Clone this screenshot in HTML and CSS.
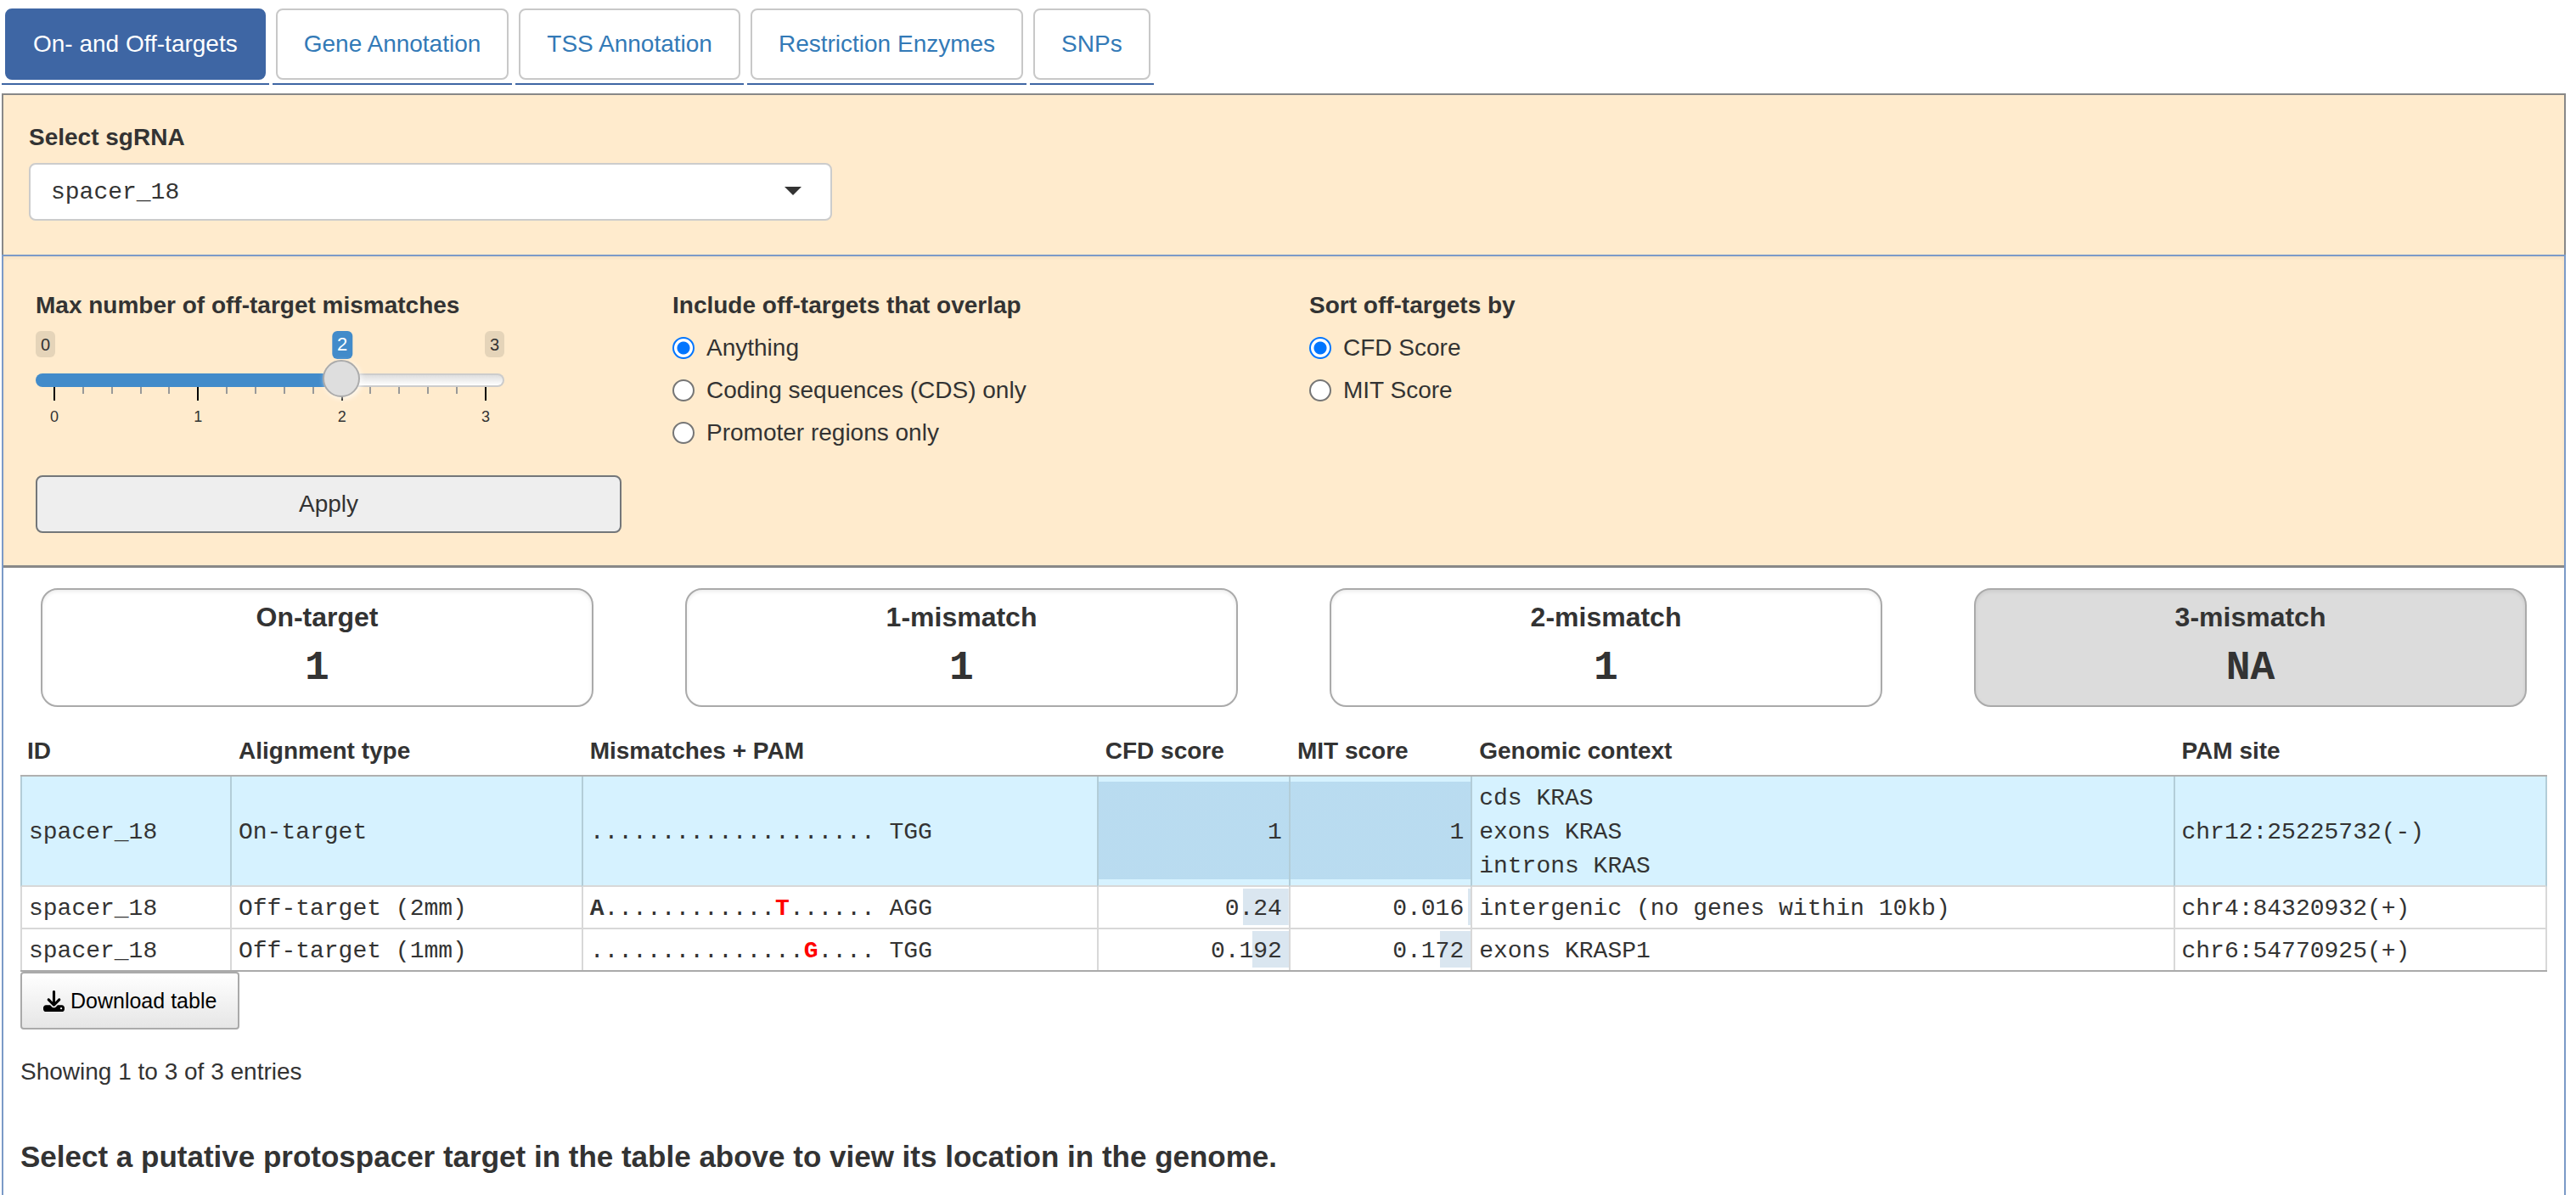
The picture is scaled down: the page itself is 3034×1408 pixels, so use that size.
FILE: index.html
```html
<!DOCTYPE html>
<html lang="en">
<head>
<meta charset="utf-8">
<title>On- and Off-targets</title>
<link rel="stylesheet" href="styles.css">
</head>
<body>
<nav>
  <ul class="tabs">
    <li class="tab"><a class="tab-link tab-link-active" href="#targets" aria-current="page">On- and Off-targets</a></li>
    <li class="tab"><a class="tab-link" href="#genes">Gene Annotation</a></li>
    <li class="tab"><a class="tab-link" href="#tss">TSS Annotation</a></li>
    <li class="tab"><a class="tab-link" href="#enzymes">Restriction Enzymes</a></li>
    <li class="tab"><a class="tab-link" href="#snps">SNPs</a></li>
  </ul>
</nav>
<section class="picker">
  <label class="field-label" for="sgrna">Select sgRNA</label>
  <div class="select-wrap">
    <select class="select" id="sgrna"><option>spacer_18</option></select>
    <svg class="select-arrow" viewBox="0 0 20 10" aria-hidden="true"><path d="M0 0H20L10 10Z"/></svg>
  </div>
</section>
<main class="panel" id="targets">
  <form class="filters">
    <div class="filter">
      <label class="field-label" for="mismatches">Max number of off-target mismatches</label>
      <div class="slider">
        <div class="slider-values">
          <span class="slider-end">0</span>
          <output class="slider-current" for="mismatches">2</output>
          <span class="slider-end">3</span>
        </div>
        <input class="slider-input" id="mismatches" type="range" min="0" max="3" value="2">
        <div class="slider-ticks" aria-hidden="true">
          <i class="tick tick-major"></i><i class="tick"></i><i class="tick"></i><i class="tick"></i><i class="tick"></i>
          <i class="tick tick-major"></i><i class="tick"></i><i class="tick"></i><i class="tick"></i><i class="tick"></i>
          <i class="tick tick-major"></i><i class="tick"></i><i class="tick"></i><i class="tick"></i><i class="tick"></i>
          <i class="tick tick-major"></i>
        </div>
        <div class="slider-scale"><span>0</span><span>1</span><span>2</span><span>3</span></div>
      </div>
      <button class="apply" type="button">Apply</button>
    </div>
    <fieldset class="filter">
      <legend class="field-label">Include off-targets that overlap</legend>
      <label class="choice"><input class="radio" type="radio" name="overlap" checked>Anything</label>
      <label class="choice"><input class="radio" type="radio" name="overlap">Coding sequences (CDS) only</label>
      <label class="choice"><input class="radio" type="radio" name="overlap">Promoter regions only</label>
    </fieldset>
    <fieldset class="filter">
      <legend class="field-label">Sort off-targets by</legend>
      <label class="choice"><input class="radio" type="radio" name="sort" checked>CFD Score</label>
      <label class="choice"><input class="radio" type="radio" name="sort">MIT Score</label>
    </fieldset>
  </form>
  <div class="cards">
    <div class="card"><h2 class="card-title">On-target</h2><p class="card-count">1</p></div>
    <div class="card"><h2 class="card-title">1-mismatch</h2><p class="card-count">1</p></div>
    <div class="card"><h2 class="card-title">2-mismatch</h2><p class="card-count">1</p></div>
    <div class="card card-off"><h2 class="card-title">3-mismatch</h2><p class="card-count">NA</p></div>
  </div>
  <div class="results">
    <table class="targets">
      <colgroup>
        <col class="col-id"><col class="col-type"><col class="col-mismatch"><col class="col-cfd"><col class="col-mit"><col class="col-context"><col>
      </colgroup>
      <thead>
        <tr><th>ID</th><th>Alignment type</th><th>Mismatches + PAM</th><th>CFD score</th><th>MIT score</th><th>Genomic context</th><th>PAM site</th></tr>
      </thead>
      <tbody>
        <tr class="on-target">
          <td>spacer_18</td><td>On-target</td><td>.................... TGG</td>
          <td class="score" style="--score:100%">1</td><td class="score" style="--score:100%">1</td>
          <td>cds KRAS<br>exons KRAS<br>introns KRAS</td><td>chr12:25225732(-)</td>
        </tr>
        <tr>
          <td>spacer_18</td><td>Off-target (2mm)</td><td><b>A</b>............<b class="seed">T</b>...... AGG</td>
          <td class="score" style="--score:24%">0.24</td><td class="score" style="--score:1.6%">0.016</td>
          <td>intergenic (no genes within 10kb)</td><td>chr4:84320932(+)</td>
        </tr>
        <tr>
          <td>spacer_18</td><td>Off-target (1mm)</td><td>...............<b class="seed">G</b>.... TGG</td>
          <td class="score" style="--score:19.2%">0.192</td><td class="score" style="--score:17.2%">0.172</td>
          <td>exons KRASP1</td><td>chr6:54770925(+)</td>
        </tr>
      </tbody>
    </table>
    <button class="download" type="button">
      <svg class="download-icon" viewBox="0 0 512 512" aria-hidden="true"><path d="M288 32c0-17.700-14.300-32-32-32s-32 14.300-32 32V274.700l-73.400-73.400c-12.500-12.500-32.800-12.500-45.300 0s-12.500 32.800 0 45.300l128 128c12.500 12.500 32.800 12.500 45.300 0l128-128c12.500-12.500 12.500-32.800 0-45.300s-32.800-12.500-45.300 0L288 274.700V32zM64 352c-35.300 0-64 28.700-64 64v32c0 35.300 28.700 64 64 64H448c35.300 0 64-28.700 64-64V416c0-35.300-28.700-64-64-64H346.500l-45.300 45.300c-25 25-65.500 25-90.500 0L165.500 352H64zm368 56a24 24 0 1 1 0 48 24 24 0 1 1 0-48z"/></svg>
      Download table
    </button>
    <p class="entries">Showing 1 to 3 of 3 entries</p>
    <h3 class="hint">Select a putative protospacer target in the table above to view its location in the genome.</h3>
  </div>
</main>
</body>
</html>
```
FILE: styles.css
```css
* {
  box-sizing: border-box;
}

body {
  display: flex;
  flex-direction: column;
  min-height: 100vh;
  margin: 0;
  padding: 10px 12px 0 2px;
  background: #fff;
  color: #333;
  font: 28px/40px "Liberation Sans", Arial, sans-serif;
}

/* Tab bar */
.tabs {
  display: flex;
  gap: 4px;
  margin: 0 0 10px;
  padding: 0;
  list-style: none;
}

.tab {
  padding: 0 4px 4px;
  border-bottom: 2px solid #3e66a4;
}

.tab-link {
  display: block;
  padding: 20px 31px;
  border: 2px solid #c8c8c8;
  border-radius: 8px;
  color: #337ab7;
  text-decoration: none;
}

.tab-link-active {
  border-color: #3e66a4;
  background: #3e66a4;
  color: #fff;
}

/* sgRNA picker */
.picker {
  padding: 30px;
  padding-bottom: 40px;
  border: 2px solid #888;
  border-bottom: 0;
  background: #ffebcd;
}

.field-label {
  display: block;
  margin: 0 0 10px;
  padding: 0;
  font-weight: bold;
}

.select-wrap {
  position: relative;
  width: 32%;
}

.select {
  display: block;
  width: 100%;
  height: 68px;
  padding: 2px 24px 0;
  border: 2px solid #ccc;
  border-radius: 8px;
  appearance: none;
  background: #fff;
  color: #333;
  font: 28px/40px "Liberation Mono", "Courier New", monospace;
}

.select-arrow {
  position: absolute;
  top: 28px;
  right: 36px;
  width: 20px;
  height: 10px;
  fill: #333;
  pointer-events: none;
}

/* Main panel */
.panel {
  flex: 1;
  border: 2px solid #7b9ac7;
  border-bottom: 0;
}

.filters {
  display: grid;
  grid-template-columns: repeat(4, 1fr);
  padding: 38px 8px;
  border-bottom: 3px solid #888;
  background: #ffebcd;
  box-shadow: inset 0 2px 4px rgba(0, 0, 0, 0.05);
}

.filter {
  min-width: 0;
  margin: 0;
  padding: 0 30px;
  border: 0;
}

.slider {
  width: 80%;
  height: 170px;
}

.slider-values {
  position: relative;
  display: flex;
  justify-content: space-between;
  height: 36px;
}

.slider-end,
.slider-current {
  padding: 4px 6px;
  border-radius: 6px;
  color: #333;
  font-size: 20px;
  line-height: 24px;
}

.slider-end {
  height: 31px;
  background: #e5d4b9;
}

.slider-current {
  position: absolute;
  left: 65%;
  height: 33px;
  transform: translateX(-40%);
  background: #428bca;
  color: #fff;
  font-size: 22px;
}

.slider-input {
  position: relative;
  display: block;
  width: 100%;
  height: 44px;
  margin: 0 0 -14px;
  appearance: none;
  background: none;
}

.slider-input::-webkit-slider-runnable-track {
  height: 16px;
  border: 2px solid transparent;
  border-radius: 16px;
  background:
    linear-gradient(to right, #428bca 65%, transparent 65%) border-box,
    linear-gradient(#dedede, #fff) padding-box,
    linear-gradient(#ccc, #ccc) border-box;
}

.slider-input::-webkit-slider-thumb {
  width: 44px;
  height: 44px;
  margin-top: -18px;
  border: 2px solid #ababab;
  border-radius: 50%;
  appearance: none;
  background: #dedede;
  box-shadow: 2px 2px 6px rgba(255, 255, 255, 0.7);
}

.slider-ticks {
  display: flex;
  justify-content: space-between;
  height: 24px;
  padding: 0 21px;
}

.tick {
  width: 2px;
  height: 8px;
  background: #999;
}

.tick-major {
  height: 16px;
  background: #000;
}

.slider-scale {
  display: flex;
  justify-content: space-between;
  padding: 0 11px;
  font-size: 18px;
  line-height: 22px;
}

.slider-scale span {
  width: 22px;
  text-align: center;
}

.apply {
  display: block;
  width: 100%;
  height: 68px;
  border: 2px solid #737679;
  border-radius: 8px;
  background: #eee;
  color: #333;
  font: inherit;
}

.choice {
  display: flex;
  align-items: center;
  gap: 14px;
  margin-bottom: 10px;
}

.radio {
  width: 26px;
  height: 26px;
  margin: 0;
  border: 2px solid #767676;
  border-radius: 50%;
  appearance: none;
  background: #fff;
}

.radio:checked {
  border-color: #0075ff;
  background: radial-gradient(circle, #0075ff 7px, #fff 8px);
}

/* Mismatch counts */
.cards {
  display: grid;
  grid-template-columns: repeat(4, 1fr);
  gap: 108px;
  padding: 24px 44px;
}

.card {
  height: 140px;
  padding-top: 10px;
  border: 2px solid #aaa;
  border-radius: 20px;
  box-shadow: inset 0 2px 4px rgba(0, 0, 0, 0.08);
  text-align: center;
}

.card-off {
  background: #dcdcdc;
}

.card-title {
  margin: 0 0 10px;
  font-size: 32px;
  line-height: 44px;
}

.card-count {
  margin: 0;
  font: bold 48px/56px "Liberation Mono", "Courier New", monospace;
}

/* Results table */
.results {
  padding: 0 20px 30px;
}

.targets {
  width: 100%;
  border-bottom: 2px solid #aaa;
  border-spacing: 0;
  table-layout: fixed;
}

.col-id { width: 8.3%; }
.col-type { width: 13.9%; }
.col-mismatch { width: 20.4%; }
.col-cfd { width: 7.6%; }
.col-mit { width: 7.2%; }
.col-context { width: 27.8%; }

.targets th {
  padding: 8px 10px;
  border-bottom: 2px solid #b0b0b0;
  text-align: left;
}

.targets th:first-child {
  padding-left: 8px;
}

.targets td {
  padding: 6px 8px 2px;
  border-left: 2px solid #d8d8d8;
  border-bottom: 2px solid #d8d8d8;
  font-family: "Liberation Mono", "Courier New", monospace;
}

.targets td:last-child {
  border-right: 2px solid #d8d8d8;
}

.targets tr:last-child td {
  border-bottom: 0;
}

.targets .on-target td {
  border-left-color: #b3cdd8;
  border-right-color: #b3cdd8;
  background-color: #d6f2ff;
}

.targets .score {
  background-image: linear-gradient(rgba(70, 130, 180, 0.2), rgba(70, 130, 180, 0.2));
  background-position: right center;
  background-repeat: no-repeat;
  background-size: var(--score) 90%;
  text-align: right;
}

.seed {
  color: #f00;
}

.download {
  display: flex;
  align-items: center;
  gap: 7px;
  height: 68px;
  padding: 0 25px;
  border: 2px solid #aaa;
  border-radius: 4px;
  background: linear-gradient(#fff, #e6e6e6);
  color: #000;
  font: 25px/40px "Liberation Sans", Arial, sans-serif;
}

.download-icon {
  width: 25px;
  height: 25px;
}

.entries {
  margin: 30px 0 58px;
}

.hint {
  margin: 0;
  font-size: 35px;
  line-height: 44px;
}
```
